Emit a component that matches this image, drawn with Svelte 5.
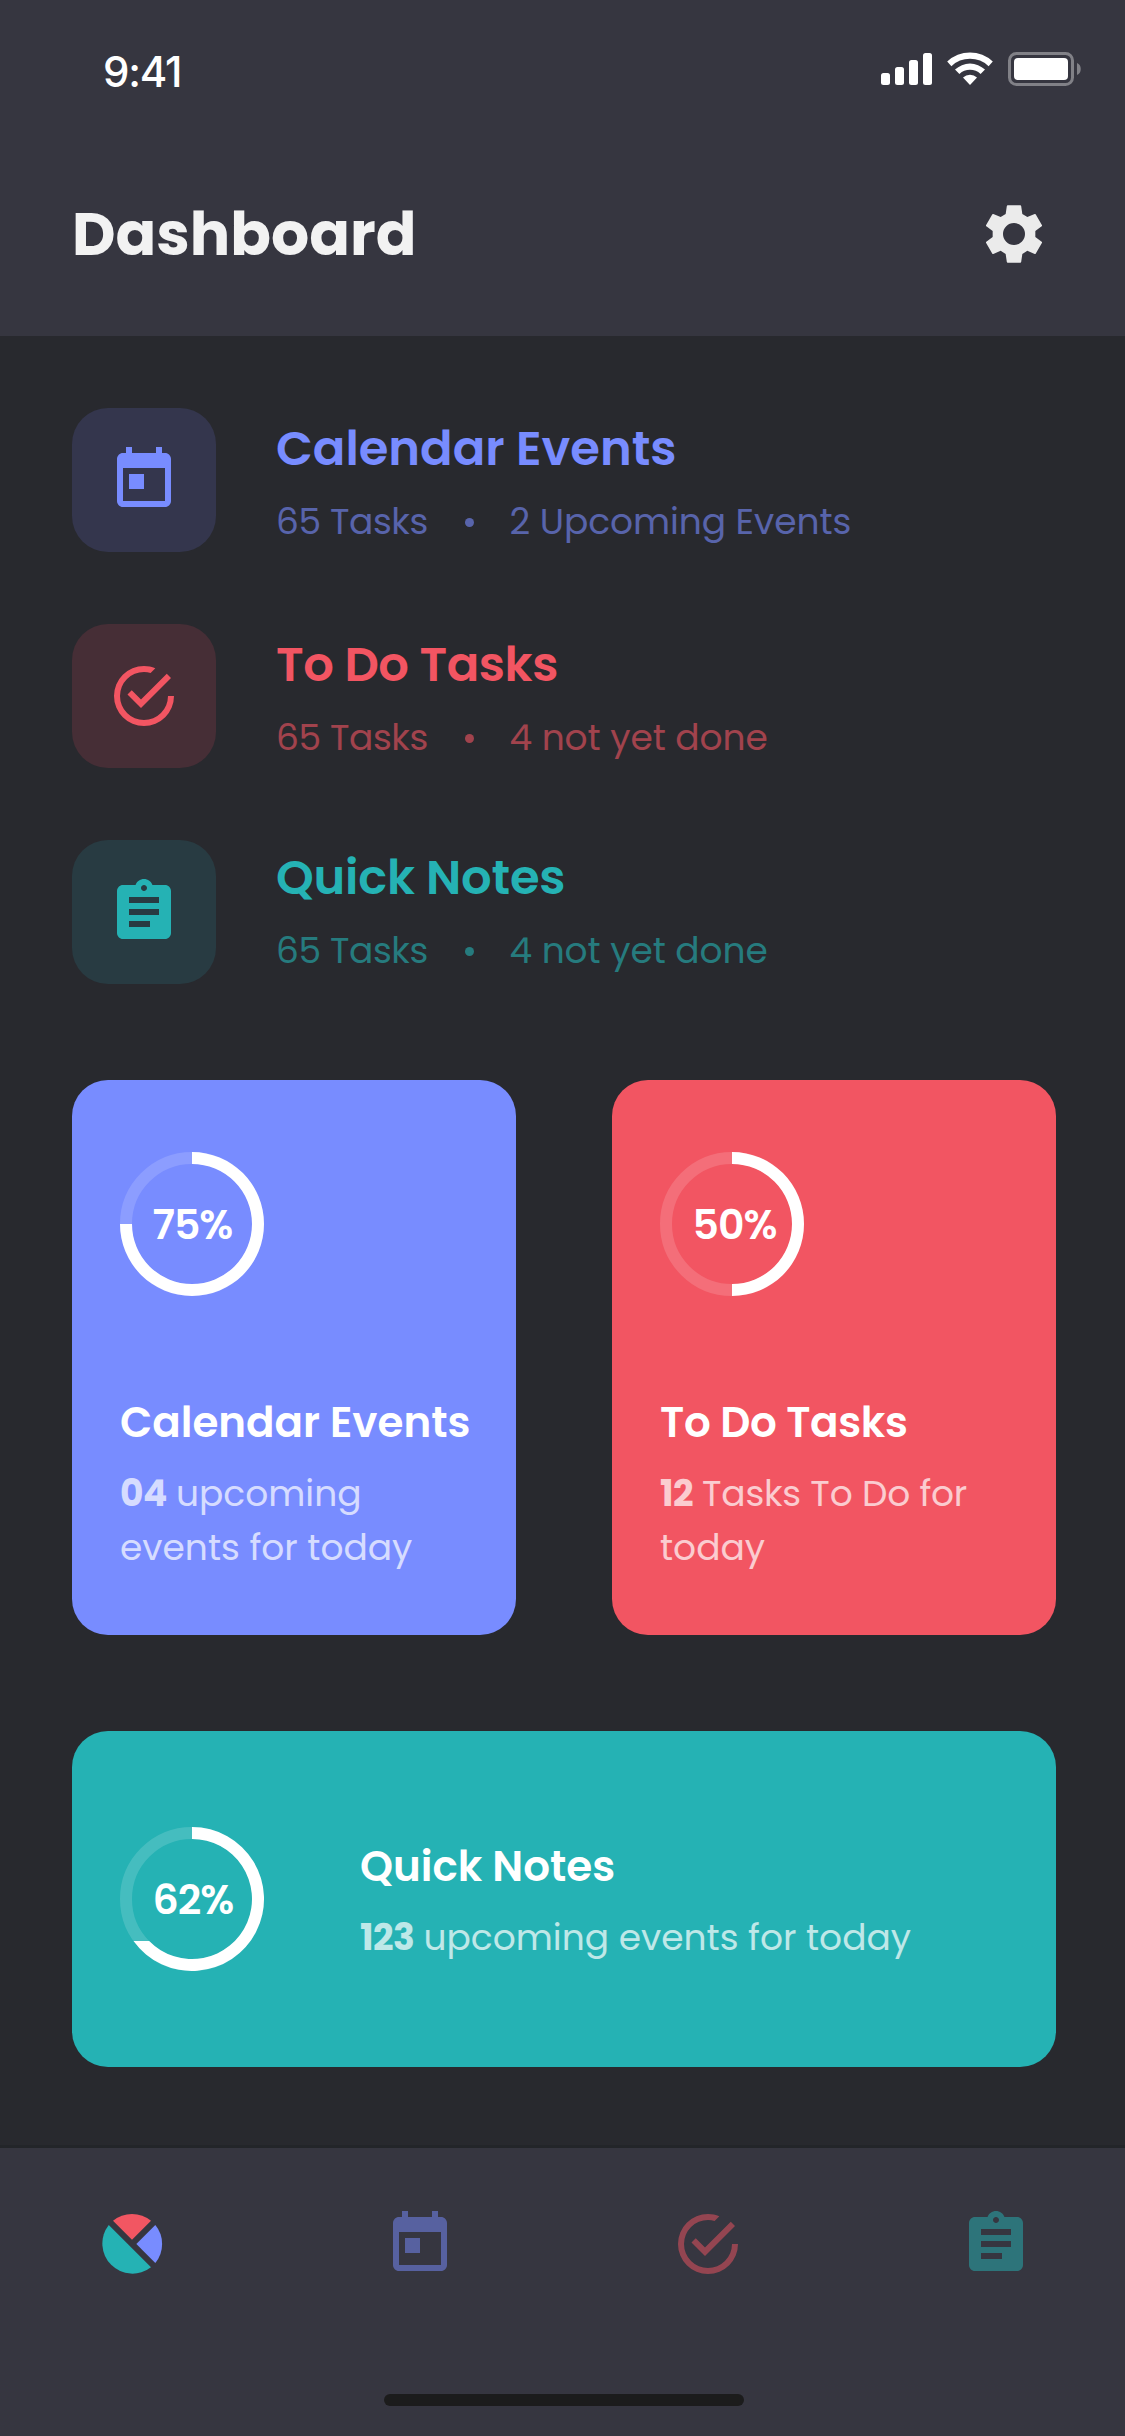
<script>
  const icons = {
    calendar:
      'M19 3h-1V1h-2v2H8V1H6v2H5c-1.1 0-2 .9-2 2v14c0 1.1.9 2 2 2h14c1.1 0 2-.9 2-2V5c0-1.1-.9-2-2-2zm0 16H5V8h14v11zM7 10h5v5H7z',
    todo:
      'M20 12A8 8 0 1 1 12 4C12.76 4 13.5 4.11 14.2 4.31L15.77 2.74C14.61 2.26 13.34 2 12 2A10 10 0 1 0 22 12M7.91 10.08L6.5 11.5L11 16L21 6L19.59 4.58L11 13.17L7.91 10.08Z',
    notes:
      'M19 3h-4.18C14.4 1.84 13.3 1 12 1c-1.3 0-2.4.84-2.82 2H5c-1.1 0-2 .9-2 2v14c0 1.1.9 2 2 2h14c1.1 0 2-.9 2-2V5c0-1.1-.9-2-2-2zm-7 0c.55 0 1 .45 1 1s-.45 1-1 1-1-.45-1-1 .45-1 1-1zm2 14H7v-2h7v2zm3-4H7v-2h10v2zm0-4H7V7h10v2z'
  };

  const lists = [
    { kind: 'calendar', title: 'Calendar Events', count: '65 Tasks', note: '2 Upcoming Events' },
    { kind: 'todo', title: 'To Do Tasks', count: '65 Tasks', note: '4 not yet done' },
    { kind: 'notes', title: 'Quick Notes', count: '65 Tasks', note: '4 not yet done' }
  ];

  const cards = [
    {
      kind: 'calendar', title: 'Calendar Events', percent: '75%', strong: '04', lines: ['upcoming', 'events for today'],
      arc: 'M72 0A72 72 0 1 1 0 72H12A60 60 0 1 0 72 12Z'
    },
    {
      kind: 'todo', title: 'To Do Tasks', percent: '50%', strong: '12', lines: ['Tasks To Do for', 'today'],
      arc: 'M72 0A72 72 0 0 1 72 144V132A60 60 0 0 0 72 12Z'
    },
    {
      kind: 'notes', title: 'Quick Notes', percent: '62%', strong: '123', lines: ['upcoming events for today'],
      arc: 'M72 0A72 72 0 1 1 13.52 114H29.15A60 60 0 1 0 72 12Z'
    }
  ];
</script>

{#snippet icon(kind)}
  <svg class="icon" viewBox="0 0 24 24" aria-hidden="true"><path d={icons[kind]} /></svg>
{/snippet}

<div class="screen">
  <header>
    <div class="status">
      <span class="time">9:41</span>
      <svg class="indicators" width="210" height="34" viewBox="0 0 210 34" aria-hidden="true">
        <g fill="#fff">
          <rect x="10" y="21" width="9" height="12" rx="2.5" />
          <rect x="24" y="15" width="9" height="18" rx="2.5" />
          <rect x="38" y="8" width="9" height="25" rx="2.5" />
          <rect x="52" y="1" width="9" height="32" rx="2.5" />
          <path d="M76.2 9.6A33 33 0 0 1 121.8 9.6L117.6 14.2A26.7 26.7 0 0 0 80.4 14.2Z" />
          <path d="M84 17.6A21.8 21.8 0 0 1 114 17.6L109.6 22A15.6 15.6 0 0 0 88.4 22Z" />
          <path d="M92 25.4A10.6 10.6 0 0 1 106 25.4L99 33Z" />
          <rect x="143" y="6" width="54" height="22" rx="4" />
        </g>
        <rect x="138.5" y="1.5" width="63" height="31" rx="7" fill="none" stroke="#818187" stroke-width="3" />
        <path d="M206 11C211 12.5 211 21.5 206 23Z" fill="#818187" />
      </svg>
    </div>
    <div class="titlebar">
      <h1>Dashboard</h1>
      <svg class="gear" viewBox="0 0 216 216" aria-hidden="true">
        <path
          fill-rule="evenodd"
          d="M89 22H127Q129 22 129.5 24L133 48L148 57L170 48Q172 47.5 173 49L192 82Q192.5 84 191 85L172 99V117L191 131Q192.5 132 192 134L173 167Q172 168.5 170 168L148 158L133 168L129.5 192Q129 194 127 194H89Q87 194 86.5 192L83 168L68 158L46 168Q44 168.5 43 167L24 134Q23.5 132 25 131L44 117V99L25 85Q23.5 84 24 82L43 49Q44 47.5 46 48L68 57L83 48L86.5 24Q87 22 89 22ZM108 75A33 33 0 1 0 108 141A33 33 0 1 0 108 75Z"
        />
      </svg>
    </div>
  </header>

  <main>
    <ul class="lists">
      {#each lists as item}
        <li class={item.kind}>
          <div class="tile">{@render icon(item.kind)}</div>
          <div class="info">
            <h2>{item.title}</h2>
            <p><span class="count">{item.count}</span><i></i><span class="note">{item.note}</span></p>
          </div>
        </li>
      {/each}
    </ul>

    <div class="cards">
      {#each cards as card}
        <section class="card {card.kind}">
          <svg class="ring" viewBox="0 0 144 144">
            <circle cx="72" cy="72" r="66" />
            <path d={card.arc} />
            <text x="32.5" y="87">{card.percent}</text>
          </svg>
          <div class="body">
            <h3>{card.title}</h3>
            <p><b>{card.strong}</b> {card.lines[0]}</p>
            {#each card.lines.slice(1) as line}
              <p class="more">{line}</p>
            {/each}
          </div>
        </section>
      {/each}
    </div>
  </main>

  <nav>
    <div class="tabs">
      <svg class="icon" viewBox="0 0 24 24" aria-hidden="true">
        <path fill="#f25662" d="M5.67 4.25L12 10.55L18.33 4.25A10 10 0 0 0 5.67 4.25Z" />
        <path fill="#788cff" d="M13.45 12L19.78 5.67A10 10 0 0 1 19.78 18.33Z" />
        <path fill="#25b2b4" d="M4.25 5.67L18.33 19.75A10.03 10.03 0 0 1 4.25 5.67Z" />
      </svg>
      {#each lists as item}
        <span class="tab {item.kind}">{@render icon(item.kind)}</span>
      {/each}
    </div>
    <div class="home"></div>
  </nav>
</div>

<style>
  :global(body) {
    background: #28292e;
  }
  .screen {
    width: 1125px;
    height: 2436px;
    display: flex;
    flex-direction: column;
    overflow: hidden;
    background: #28292e;
    font-family: Poppins, Inter, sans-serif;
  }
  h1, h2, h3, p, ul {
    margin: 0;
    padding: 0;
  }
  .calendar { --c: #788cff; --tile: #34364d; }
  .todo { --c: #f25562; --tile: #462e36; }
  .notes { --c: #25b2b4; --tile: #283b42; }

  header {
    height: 336px;
    flex: none;
    background: #363640;
  }
  .status {
    height: 144px;
    display: flex;
    align-items: center;
    justify-content: space-between;
    padding: 0 44px 0 103px;
  }
  .time {
    font: 550 42px/60px Inter, sans-serif;
    letter-spacing: -1.2px;
    color: #fff;
  }
  .indicators {
    margin-bottom: 6px;
    flex: none;
  }
  .titlebar {
    height: 180px;
    display: flex;
    align-items: center;
    justify-content: space-between;
    padding: 0 75px 0 72px;
  }
  h1 {
    font-size: 60px;
    line-height: 90px;
    font-weight: 700;
    color: #f2f2f2;
  }
  .gear {
    width: 72px;
    height: 72px;
    fill: #ebebeb;
  }

  main {
    flex: 1;
    padding: 72px 69px 0 72px;
  }
  .lists {
    display: flex;
    flex-direction: column;
    gap: 72px;
    list-style: none;
  }
  li {
    display: flex;
    gap: 60px;
    height: 144px;
    color: var(--c);
  }
  .tile {
    width: 144px;
    height: 144px;
    border-radius: 36px;
    background: var(--tile);
    display: grid;
    place-items: center;
  }
  .icon {
    display: block;
    width: 72px;
    height: 72px;
    fill: var(--c);
  }
  .info {
    padding-top: 5px;
  }
  .notes .info {
    padding-top: 2px;
  }
  h2 {
    font-size: 48px;
    line-height: 72px;
    font-weight: 600;
  }
  .todo h2 {
    letter-spacing: -0.45px;
  }
  .notes h2 {
    letter-spacing: -0.2px;
  }
  .info p {
    margin-top: 10px;
    display: grid;
    grid-template-columns: 189px 9px auto;
    align-items: center;
    font-size: 36px;
    line-height: 54px;
    font-weight: 400;
    opacity: 0.6;
  }
  .count {
    letter-spacing: -0.4px;
  }
  .note {
    padding-left: 35.5px;
    letter-spacing: -0.06px;
  }
  i {
    width: 9px;
    height: 9px;
    border-radius: 50%;
    background: var(--c);
  }

  .cards {
    margin-top: 96px;
    display: grid;
    grid-template-columns: 444px 444px;
    gap: 96px;
  }
  .card {
    box-sizing: border-box;
    height: 555px;
    padding: 72px 40px 0 48px;
    border-radius: 36px;
    background: var(--c);
    color: #fff;
  }
  .card.notes {
    grid-column: 1 / -1;
    height: 336px;
    padding: 0 48px;
    display: flex;
    align-items: center;
    gap: 96px;
  }
  .ring {
    display: block;
    width: 144px;
    height: 144px;
    flex: none;
    fill: #fff;
  }
  .ring circle {
    fill: none;
    stroke: #fff;
    stroke-opacity: 0.15;
    stroke-width: 12;
  }
  .ring text {
    font-size: 41px;
    font-weight: 600;
    letter-spacing: -1px;
  }
  .body {
    margin-top: 95px;
  }
  .notes .body {
    margin-top: 2px;
  }
  h3 {
    font-size: 42px;
    line-height: 63px;
    font-weight: 600;
    white-space: nowrap;
  }
  .todo h3 {
    letter-spacing: -0.3px;
  }
  .body p {
    margin-top: 13px;
    font-size: 36px;
    line-height: 54px;
    font-weight: 400;
    opacity: 0.7;
  }
  .body .more {
    margin-top: 0;
  }
  .todo .body p:not(.more) {
    letter-spacing: -0.2px;
  }
  .body b {
    font-weight: 700;
    letter-spacing: -0.5px;
    margin-right: -0.5px;
  }

  nav {
    height: 288px;
    flex: none;
    display: flex;
    flex-direction: column;
    justify-content: space-between;
    align-items: center;
    border-top: 3px solid #232529;
    background: #363640;
  }
  .tabs {
    align-self: stretch;
    display: flex;
    justify-content: space-between;
    padding: 60px 93px 0 96px;
  }
  .tab {
    opacity: 0.5;
  }
  .home {
    width: 360px;
    height: 12px;
    margin: 0 0 30px 3px;
    border-radius: 6px;
    background: #1c1c1c;
  }
</style>
